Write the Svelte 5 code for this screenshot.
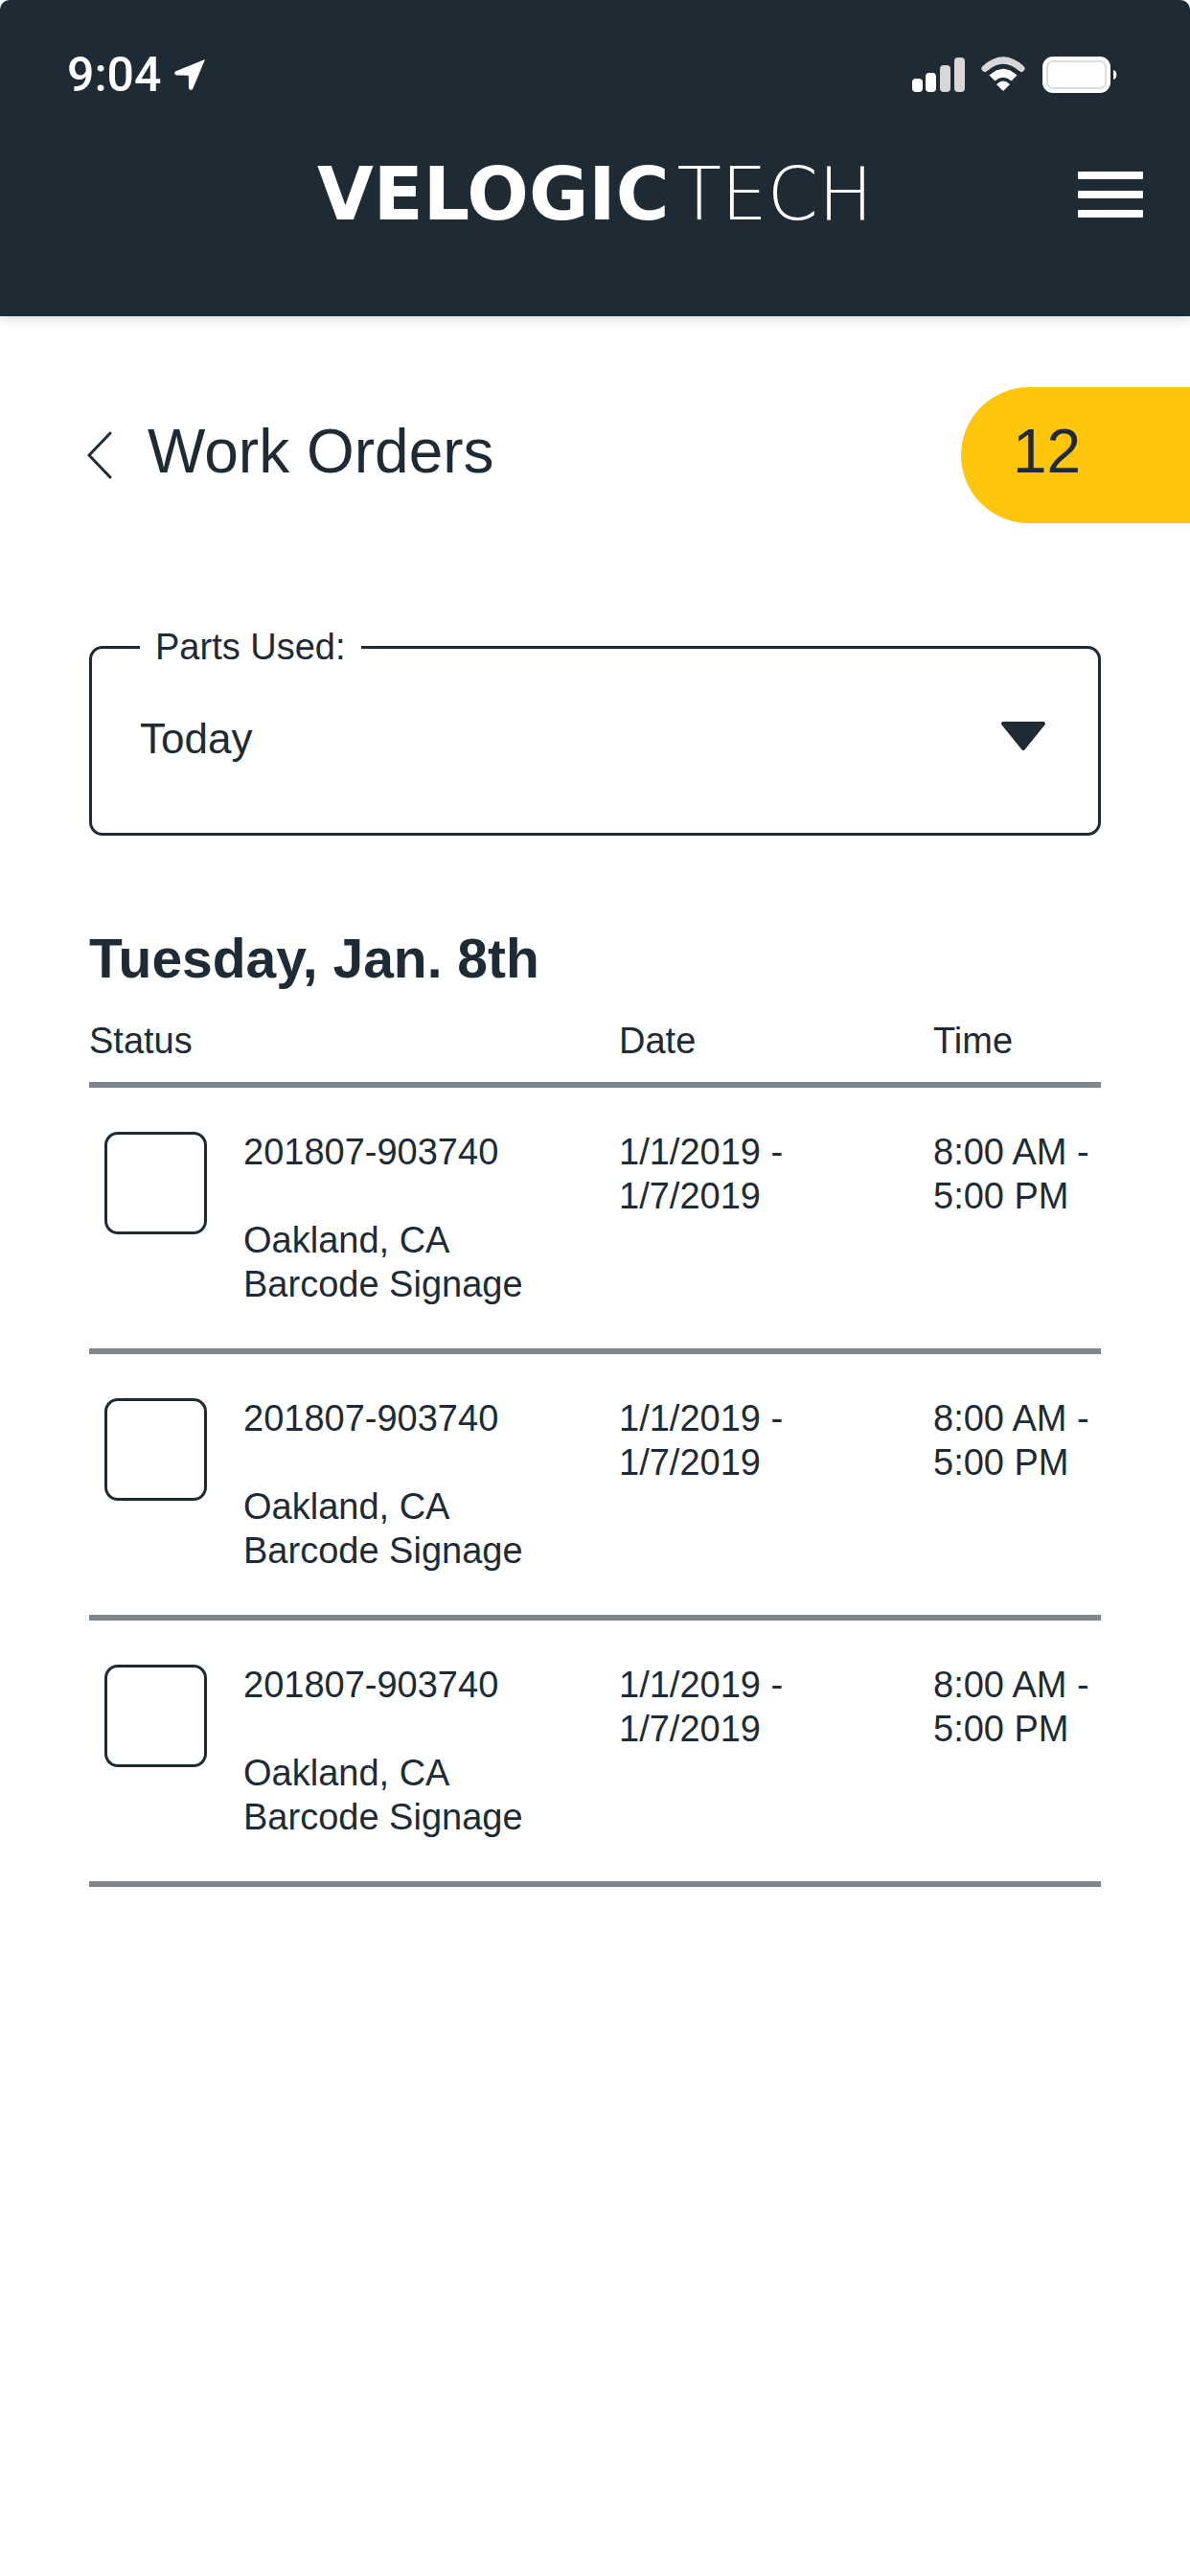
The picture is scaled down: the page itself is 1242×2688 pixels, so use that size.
<script>
    const ranges = ["Today", "This Week", "This Month"];
    let selectedRange = "Today";

    const heading = "Tuesday, Jan. 8th";
    let orders = [1, 2, 3].map((id) => ({
        id,
        number: "201807-903740",
        city: "Oakland, CA",
        job: "Barcode Signage",
        startDate: "1/1/2019",
        endDate: "1/7/2019",
        startTime: "8:00 AM",
        endTime: "5:00 PM",
        done: false,
    }));
</script>

<div class="screen">
    <header class="header">
        <div class="status-bar">
            <div class="clock">
                <span>9:04</span>
                <svg width="32" height="33" viewBox="0 0 32 33" aria-hidden="true">
                    <path
                        d="M30.6 0.4 1.6 12.2C-0.6 13.2-0.2 16.3 2.2 16.4L14 16.7C14.6 16.7 14.8 17 14.8 17.5L15 29.4C15.1 32 18.3 32.6 19.4 30.2L31.4 1.4C31.8 0.5 31.4 0.1 30.6 0.4Z"
                        fill="#fff"
                    />
                </svg>
            </div>
            <div class="indicators">
                <svg class="signal" width="55" height="38" viewBox="0 0 55 38" aria-hidden="true">
                    <rect x="0" y="23" width="11" height="14" rx="4" fill="#fff" />
                    <rect x="14" y="17" width="11" height="20" rx="4" fill="#fff" />
                    <rect x="29" y="9" width="11" height="28" rx="4" fill="#d8d6d6" />
                    <rect x="44" y="1" width="11" height="36" rx="4" fill="#d8d6d6" />
                </svg>
                <svg class="wifi" width="46" height="38" viewBox="0 0 46 38" aria-hidden="true">
                    <path d="M4 12.500Q23-4.500 42 12.500" fill="none" stroke="#d8d6d6" stroke-width="7" stroke-linecap="round" />
                    <path d="M9 19.500Q23 7 37 19.500L31.500 25Q23 17.500 14.500 25Z" fill="#fff" stroke="#fff" stroke-width="1" stroke-linejoin="round" />
                    <path d="M16.500 29Q23 23 29.500 29L23 35.500Z" fill="#fff" stroke="#fff" stroke-width="1" stroke-linejoin="round" />
                </svg>
                <svg width="78" height="38" viewBox="0 0 78 38" aria-hidden="true">
                    <rect x="0" y="0" width="71" height="38" rx="11" fill="#fff" />
                    <rect x="5" y="5" width="61" height="28" rx="6" fill="none" stroke="#dedcdc" stroke-width="2" />
                    <path d="M74 14C78.500 15 78.500 23 74 24Z" fill="#fff" />
                </svg>
            </div>
        </div>
        <nav class="nav">
            <a class="logo" href="/"><strong>VELOGIC</strong><span>TECH</span></a>
            <button class="menu" aria-label="Menu">
                <span></span>
                <span></span>
                <span></span>
            </button>
        </nav>
    </header>

    <main>
        <div class="title-row">
            <button class="back" aria-label="Back">
                <svg width="26" height="50" viewBox="0 0 26 50" aria-hidden="true">
                    <path d="M24 2 2 25 24 48" fill="none" stroke="#1e2b35" stroke-width="3" stroke-linecap="round" />
                </svg>
            </button>
            <h1>Work Orders</h1>
            <span class="count">12</span>
        </div>

        <div class="content">
            <fieldset class="filter">
                <legend><label for="range">Parts Used:</label></legend>
                <div class="select-wrap">
                    <select id="range" bind:value={selectedRange}>
                        {#each ranges as range}
                            <option value={range}>{range}</option>
                        {/each}
                    </select>
                    <svg class="caret" width="48" height="32" viewBox="0 0 48 32" aria-hidden="true">
                        <path d="M3 3H45L24 29Z" fill="#1e2b35" stroke="#1e2b35" stroke-width="4" stroke-linejoin="round" />
                    </svg>
                </div>
            </fieldset>

            <h2>{heading}</h2>
            <table>
                <thead>
                    <tr>
                        <th>Status</th>
                        <th class="date">Date</th>
                        <th class="time">Time</th>
                    </tr>
                </thead>
                <tbody>
                    {#each orders as order (order.id)}
                        <tr>
                            <td>
                                <div class="order">
                                    <input
                                        type="checkbox"
                                        id="order-{order.id}"
                                        bind:checked={order.done}
                                    />
                                    <label for="order-{order.id}">
                                        <span class="number">{order.number}</span>
                                        <span>{order.city}</span>
                                        <span>{order.job}</span>
                                    </label>
                                </div>
                            </td>
                            <td>{order.startDate} -<br />{order.endDate}</td>
                            <td>{order.startTime} -<br />{order.endTime}</td>
                        </tr>
                    {/each}
                </tbody>
            </table>
        </div>
    </main>
</div>

<style>
    :global(body) {
        background: #fff;
    }
    .screen {
        min-height: 100vh;
        background: #fff;
        color: #1e2b35;
        font-family: "Liberation Sans", Arial, sans-serif;
        font-size: 38px;
        line-height: 46px;
    }
    button {
        padding: 0;
        border: none;
        background: none;
        cursor: pointer;
    }
    .header {
        padding: 50px 0 82px;
        background: #1e2b35;
        border-radius: 10px 10px 0 0;
        box-shadow: 0 4px 12px rgba(0, 0, 0, 0.12);
    }
    .status-bar {
        display: flex;
        justify-content: space-between;
        align-items: center;
        height: 56px;
        padding: 0 76px 0 70px;
        color: #fff;
    }
    .clock {
        display: flex;
        align-items: center;
        gap: 14px;
        font-family: Roboto, sans-serif;
        font-size: 50px;
        font-weight: 500;
        line-height: 56px;
    }
    .indicators {
        display: flex;
        align-items: center;
    }
    .signal {
        margin-right: 17px;
    }
    .wifi {
        margin-right: 18px;
    }
    .nav {
        display: grid;
        grid-template-columns: 1fr auto 1fr;
        align-items: center;
        margin-top: 52px;
        padding: 0 49px;
    }
    .logo {
        grid-column: 2;
        display: flex;
        gap: 8px;
        color: #fff;
        font-family: "DejaVu Sans", sans-serif;
        font-size: 76px;
        line-height: 90px;
        text-decoration: none;
    }
    .logo strong {
        font-weight: 700;
    }
    .logo span {
        font-weight: 200;
    }
    .menu {
        justify-self: end;
        display: flex;
        flex-direction: column;
        gap: 12px;
        width: 68px;
    }
    .menu span {
        height: 8px;
        border-radius: 1px;
        background: #fff;
    }
    .title-row {
        display: flex;
        margin-top: 74px;
        padding-left: 91px;
        font-size: 64px;
        line-height: 74px;
    }
    .back {
        display: flex;
        align-items: center;
        margin-right: 37px;
    }
    h1,
    .count {
        margin: 0;
        padding: 30px 0 38px;
        font-size: 64px;
        font-weight: 400;
    }
    .count {
        width: 185px;
        margin-left: auto;
        padding-left: 54px;
        border-radius: 71px 0 0 71px;
        background: #ffc60b;
    }
    .content {
        padding: 0 93px;
    }
    .filter {
        min-width: 0;
        margin: 106px 0 0;
        padding: 0;
        border: 3px solid #1e2b35;
        border-radius: 14px;
    }
    legend {
        margin-left: 50px;
        padding: 0 16px;
    }
    .select-wrap {
        position: relative;
        padding-bottom: 27px;
    }
    select {
        display: block;
        width: 100%;
        height: 144px;
        padding: 0 120px 0 50px;
        border: none;
        background: transparent;
        color: inherit;
        font-family: inherit;
        font-size: 44px;
        appearance: none;
    }
    .caret {
        position: absolute;
        top: 54px;
        right: 54px;
        pointer-events: none;
    }
    h2 {
        margin: 96px 0 31px;
        font-size: 57px;
        line-height: 64px;
    }
    table {
        width: 100%;
        table-layout: fixed;
        border-spacing: 0;
    }
    th {
        padding: 0 0 20px;
        border-bottom: 6px solid #7d868d;
        font-weight: 400;
        text-align: left;
    }
    .date {
        width: 328px;
    }
    .time {
        width: 175px;
    }
    td {
        padding: 44px 0;
        border-bottom: 6px solid #7d868d;
        vertical-align: top;
        white-space: nowrap;
    }
    .order {
        display: flex;
        align-items: flex-start;
        gap: 38px;
        padding-left: 16px;
    }
    .order input {
        flex: none;
        width: 107px;
        height: 107px;
        margin: 2px 0 0;
        border: 3px solid #1e2b35;
        border-radius: 14px;
        background: #fff;
        appearance: none;
    }
    .order input:checked {
        background: #ffc60b;
    }
    .order label span {
        display: block;
    }
    .order .number {
        margin-bottom: 46px;
    }
</style>
